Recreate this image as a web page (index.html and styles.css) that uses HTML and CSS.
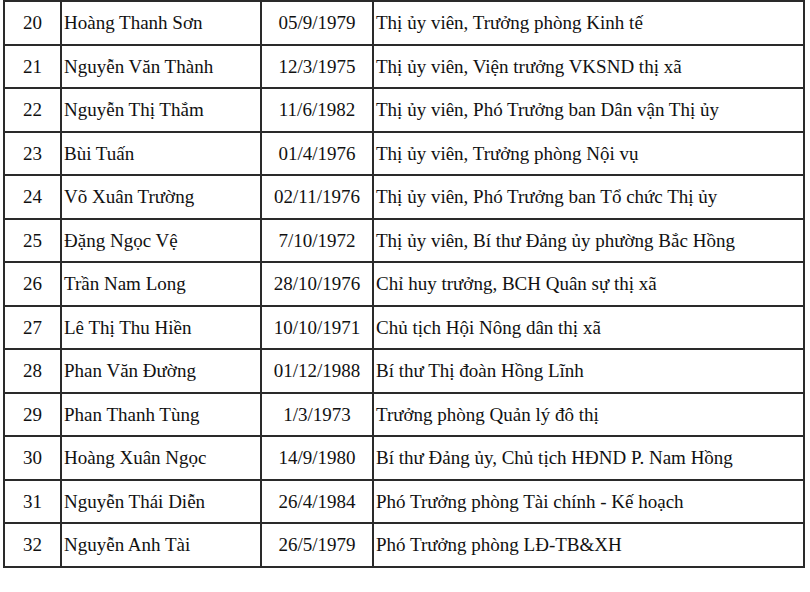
FILE: index.html
```html
<!DOCTYPE html>
<html lang="vi">
<head>
<meta charset="utf-8">
<link rel="stylesheet" href="styles.css">
</head>
<body>
<table class="list">
  <colgroup>
    <col class="c-no"><col class="c-name"><col class="c-date"><col class="c-role">
  </colgroup>
  <tr><td class="no">20</td><td class="name">Hoàng Thanh Sơn</td><td class="date">05/9/1979</td><td class="role">Thị ủy viên, Trưởng phòng Kinh tế</td></tr>
  <tr><td class="no">21</td><td class="name">Nguyễn Văn Thành</td><td class="date">12/3/1975</td><td class="role">Thị ủy viên, Viện trưởng VKSND thị xã</td></tr>
  <tr><td class="no">22</td><td class="name">Nguyễn Thị Thắm</td><td class="date">11/6/1982</td><td class="role">Thị ủy viên, Phó Trưởng ban Dân vận Thị ủy</td></tr>
  <tr><td class="no">23</td><td class="name">Bùi Tuấn</td><td class="date">01/4/1976</td><td class="role">Thị ủy viên, Trưởng phòng Nội vụ</td></tr>
  <tr><td class="no">24</td><td class="name">Võ Xuân Trường</td><td class="date">02/11/1976</td><td class="role">Thị ủy viên, Phó Trưởng ban Tổ chức Thị ủy</td></tr>
  <tr><td class="no">25</td><td class="name">Đặng Ngọc Vệ</td><td class="date">7/10/1972</td><td class="role">Thị ủy viên, Bí thư Đảng ủy phường Bắc Hồng</td></tr>
  <tr><td class="no">26</td><td class="name">Trần Nam Long</td><td class="date">28/10/1976</td><td class="role">Chỉ huy trưởng, BCH Quân sự thị xã</td></tr>
  <tr><td class="no">27</td><td class="name">Lê Thị Thu Hiền</td><td class="date">10/10/1971</td><td class="role">Chủ tịch Hội Nông dân thị xã</td></tr>
  <tr><td class="no">28</td><td class="name">Phan Văn Đường</td><td class="date">01/12/1988</td><td class="role">Bí thư Thị đoàn Hồng Lĩnh</td></tr>
  <tr><td class="no">29</td><td class="name">Phan Thanh Tùng</td><td class="date">1/3/1973</td><td class="role">Trưởng phòng Quản lý đô thị</td></tr>
  <tr><td class="no">30</td><td class="name">Hoàng Xuân Ngọc</td><td class="date">14/9/1980</td><td class="role">Bí thư Đảng ủy, Chủ tịch HĐND P. Nam Hồng</td></tr>
  <tr><td class="no">31</td><td class="name">Nguyễn Thái Diễn</td><td class="date">26/4/1984</td><td class="role">Phó Trưởng phòng Tài chính - Kế hoạch</td></tr>
  <tr><td class="no">32</td><td class="name">Nguyễn Anh Tài</td><td class="date">26/5/1979</td><td class="role">Phó Trưởng phòng LĐ-TB&amp;XH</td></tr>
</table>
</body>
</html>
```
FILE: styles.css
```css
html, body {
  margin: 0;
  padding: 0;
  background: #ffffff;
}
body {
  padding: 0 0 0 3px;
  font-family: "Liberation Serif", "Times New Roman", serif;
  font-size: 19px;
  color: #111111;
}
.list {
  border-collapse: collapse;
  table-layout: fixed;
  width: 800px;
  margin-top: 0;
}
.c-no { width: 57px; }
.c-name { width: 200px; }
.c-date { width: 112px; }
.c-role { width: 431px; }
.list td {
  border: 2px solid #2a2a2a;
  height: 43.5px;
  box-sizing: border-box;
  padding: 0 2px;
  vertical-align: middle;
  white-space: nowrap;
  line-height: 1;
}
.no, .date { text-align: center; }
.name { padding-left: 1px; }
.role { padding-left: 2px; }
```
